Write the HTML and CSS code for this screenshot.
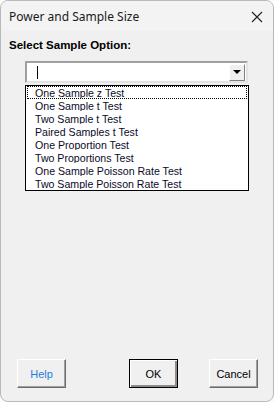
FILE: index.html
```html
<!DOCTYPE html>
<html lang="en">
<head>
  <meta charset="UTF-8" />
  <title>Power and Sample Size</title>
  <link rel="stylesheet" href="styles.css">
</head>
<body>
<div class="window">
  <div class="titlebar">
    <span class="title">Power and Sample Size</span>
    <svg class="close" width="12" height="12" viewBox="0 0 12 12">
      <path d="M1 1 L11 11 M11 1 L1 11" stroke="#222" stroke-width="1.1" fill="none"/>
    </svg>
  </div>

  <div class="content">
    <div class="label">Select Sample Option:</div>

    <div class="combo">
      <div class="combo-text"><span class="caret"></span></div>
      <div class="combo-btn">
        <svg width="8" height="5" viewBox="0 0 8 5"><path d="M0 0 H8 L4 4 Z" fill="#000"/></svg>
      </div>
    </div>

    <ul class="listbox">
      <li class="focused">One Sample z Test</li>
      <li>One Sample t Test</li>
      <li>Two Sample t Test</li>
      <li>Paired Samples t Test</li>
      <li>One Proportion Test</li>
      <li>Two Proportions Test</li>
      <li>One Sample Poisson Rate Test</li>
      <li>Two Sample Poisson Rate Test</li>
    </ul>

    <div class="spacer"></div>

    <div class="buttons">
      <button class="btn btn-help">Help</button>
      <button class="btn btn-default">OK</button>
      <button class="btn">Cancel</button>
    </div>
  </div>
</div>
</body>
</html>
```

FILE: styles.css
```css
html, body {
  margin: 0;
  padding: 0;
  background: #fafafa;
}

.window {
  width: 272px;
  height: 400px;
  border: 1px solid #b9b9b9;
  border-radius: 8px;
  background: #f0f0f0;
  display: flex;
  flex-direction: column;
  overflow: hidden;
  font-family: "Liberation Sans", Arial, sans-serif;
}

.titlebar {
  height: 30px;
  background: #f3f3f3;
  display: flex;
  align-items: center;
  justify-content: space-between;
  padding: 0 10px 0 8px;
}

.title {
  font-family: "Noto Sans", sans-serif;
  font-size: 12px;
  color: #1a1a1a;
}

.close {
  margin-top: 1px;
}

.content {
  flex: 1;
  display: flex;
  flex-direction: column;
  padding: 0 0 13px 0;
}

.label {
  font-family: "Liberation Sans", Arial, sans-serif;
  font-weight: bold;
  font-size: 11.5px;
  color: #000;
  margin: 8px 0 0 8px;
  height: 17px;
}

.combo {
  margin: 5px 0 0 24px;
  width: 219px;
  height: 18px;
  background: #fff;
  border: 2px solid;
  border-color: #a0a0a0 #e3e3e3 #e3e3e3 #a0a0a0;
  display: flex;
  justify-content: space-between;
}

.combo-text {
  display: flex;
  align-items: center;
  padding-left: 10px;
}

.caret {
  display: block;
  width: 1px;
  height: 13px;
  background: #000;
}

.combo-btn {
  width: 14px;
  height: 15px;
  margin: 1px 1px 0 0;
  background: #f0f0f0;
  border: 1px solid;
  border-color: #fff #808080 #808080 #fff;
  display: flex;
  align-items: center;
  justify-content: center;
}

.listbox {
  list-style: none;
  margin: 2px 0 0 24px;
  padding: 0;
  width: 222px;
  background: #fff;
  border: 1px solid #000;
}

.listbox li {
  height: 13px;
  line-height: 12px;
  font-size: 10.6px;
  color: #0a0a28;
  padding-left: 7px;
  border: 1px dotted transparent;
  margin: 0 1px;
  box-sizing: border-box;
  overflow: hidden;
  white-space: nowrap;
}

.listbox li.focused {
  border-color: #000;
}

.spacer {
  flex: 1;
}

.buttons {
  display: flex;
  padding: 0 0 0 16px;
}

.btn {
  width: 49px;
  height: 29px;
  background: #f0f0f0;
  border: 1px solid;
  border-color: #fff #6b6b6b #6b6b6b #fff;
  box-shadow: inset -1px -1px 0 #a0a0a0;
  font-family: "Liberation Sans", Arial, sans-serif;
  font-size: 11px;
  color: #000;
  padding: 0;
}

.btn-help {
  color: #1e7fe0;
}

.btn-default {
  margin: 0 31px 0 63px;
  border: 1px solid #000;
  box-shadow: inset 1px 1px 0 #fff, inset -2px -2px 0 #8c8c8c;
}
```
